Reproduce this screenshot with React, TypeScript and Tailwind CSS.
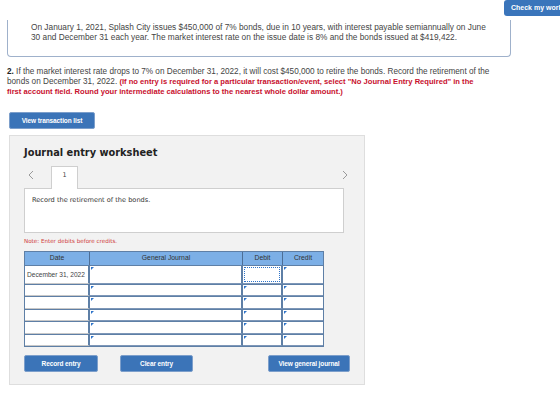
const ROWS = [
  { date: 'December 31, 2022', tall: true },
  { date: '', tall: false },
  { date: '', tall: false },
  { date: '', tall: false },
  { date: '', tall: false },
  { date: '', tall: false },
];

const Mark = () => (
  <span className="absolute left-[1px] top-[1px] w-0 h-0 border-t-[3px] border-r-[3px] border-t-[#2f74c9] border-r-transparent" />
);

const Btn = ({ label, w }: { label: string; w: string }) => (
  <button
    className={`${w} block h-[17px] rounded-[2px] bg-[#3b74b8] border border-[#7d9fcb] text-white text-[6.5px] leading-[15px] font-bold font-['Liberation_Sans',Arial,sans-serif] tracking-[-0.1px]`}
  >
    {label}
  </button>
);

export default function App() {
  return (
    <div className="relative w-[560px] h-[406px] overflow-hidden bg-white font-['Liberation_Sans',Arial,sans-serif] text-[#333]">
      <button className="absolute right-[-12px] top-0 w-[68px] h-[16px] rounded-l-[3px] bg-[#3a75bb] text-white text-[7px] font-bold text-left pl-[7px]">
        Check my work
      </button>

      <div className="ml-[7px] mt-[20px] w-[504px] h-[37px] border border-t-0 border-[#9fb1cb] rounded-b-[4px] pl-[23px] pt-[2px] text-[8.3px] leading-[10px] text-[#444] whitespace-nowrap">
        On January 1, 2021, Splash City issues $450,000 of 7% bonds, due in 10 years, with interest payable semiannually on June
        <br />
        30 and December 31 each year. The market interest rate on the issue date is 8% and the bonds issued at $419,422.
      </div>

      <p className="ml-[7px] mt-[10px] w-[510px] text-[8.2px] leading-[10px] text-[#444] whitespace-nowrap">
        <span className="font-bold text-[#222]">2.</span> If the market interest rate drops to 7% on December 31, 2022, it will cost $450,000 to retire the bonds. Record the retirement of the
        <br />
        bonds on December 31, 2022.{' '}
        <span className="font-bold text-[#c8102e] text-[7.6px]">
          (If no entry is required for a particular transaction/event, select "No Journal Entry Required" in the
          <br />
          first account field. Round your intermediate calculations to the nearest whole dollar amount.)
        </span>
      </p>

      <div className="ml-[9px] mt-[15px] flex">
        <Btn label="View transaction list" w="w-[86px]" />
      </div>

      <div className="ml-[9px] mt-[6px] w-[356px] h-[250px] bg-[#f2f2f2] border border-[#dedede] pl-[14px] pt-[10px] font-['DejaVu_Sans',Verdana,sans-serif]">
        <h2 className="text-[9.8px] leading-[14px] font-bold text-[#222]">Journal entry worksheet</h2>

        <div className="relative mt-[6px] h-[22px] w-[320px]">
          <svg className="absolute left-[4px] top-[4px]" width="6" height="10" viewBox="0 0 6 10">
            <path d="M5 1 L1 5 L5 9" fill="none" stroke="#9a9a9a" strokeWidth="1" />
          </svg>
          <div className="absolute left-[27px] top-0 w-[27px] h-[23px] bg-white border border-b-0 border-[#cfcfcf] text-center text-[6.5px] leading-[16px] text-[#444] z-10">
            1
          </div>
          <svg className="absolute left-[318px] top-[4px]" width="6" height="10" viewBox="0 0 6 10">
            <path d="M1 1 L5 5 L1 9" fill="none" stroke="#9a9a9a" strokeWidth="1" />
          </svg>
        </div>

        <div className="w-[320px] h-[45px] bg-white border border-[#cfcfcf] pl-[7px] pt-[6px] text-[6.6px] leading-[10px] text-[#333]">
          Record the retirement of the bonds.
        </div>

        <p className="mt-[3px] text-[5.6px] leading-[10px] text-[#d03a3a]">Note: Enter debits before credits.</p>

        <div className="mt-[5px] w-[300px] font-['Liberation_Sans',Arial,sans-serif] border border-[#5e7fa6]">
          <div className="grid grid-cols-[65px_153px_40px_40px] h-[13px] bg-[#7cafe6] text-[6.8px] text-[#333]">
            <div className="flex items-center justify-center border-r border-[#4d6e96]">Date</div>
            <div className="flex items-center justify-center border-r border-[#4d6e96]">General Journal</div>
            <div className="flex items-center justify-center border-r border-[#4d6e96]">Debit</div>
            <div className="flex items-center justify-center">Credit</div>
          </div>
          {ROWS.map((row, i) => (
            <div
              key={i}
              className={`grid grid-cols-[65px_153px_40px_40px] ${row.tall ? 'h-[19px]' : 'h-[12.4px]'} border-t border-[#5e7fa6]`}
            >
              <div className="flex items-center pl-[2px] bg-white border-r-2 border-[#5e7fa6] border-b border-b-[#c8c8c8] text-[6.6px] text-[#444] whitespace-nowrap">
                {row.date}
              </div>
              <div className="relative bg-white border-r-2 border-[#5e7fa6] border-b border-b-[#7e97b8]">
                <Mark />
              </div>
              <div className="relative bg-white border-r-2 border-[#5e7fa6] border-b border-b-[#7e97b8]">
                {i === 0 ? (
                  <div className="absolute inset-[1px] border border-dotted border-[#2f74c9]" />
                ) : (
                  <Mark />
                )}
              </div>
              <div className="relative bg-white border-b border-b-[#7e97b8]">
                <Mark />
              </div>
            </div>
          ))}
        </div>

        <div className="mt-[8px] flex items-start w-[326px]">
          <Btn label="Record entry" w="w-[74px]" />
          <div className="ml-[22px]">
            <Btn label="Clear entry" w="w-[73px]" />
          </div>
          <div className="ml-auto">
            <Btn label="View general journal" w="w-[82px]" />
          </div>
        </div>
      </div>
    </div>
  );
}
